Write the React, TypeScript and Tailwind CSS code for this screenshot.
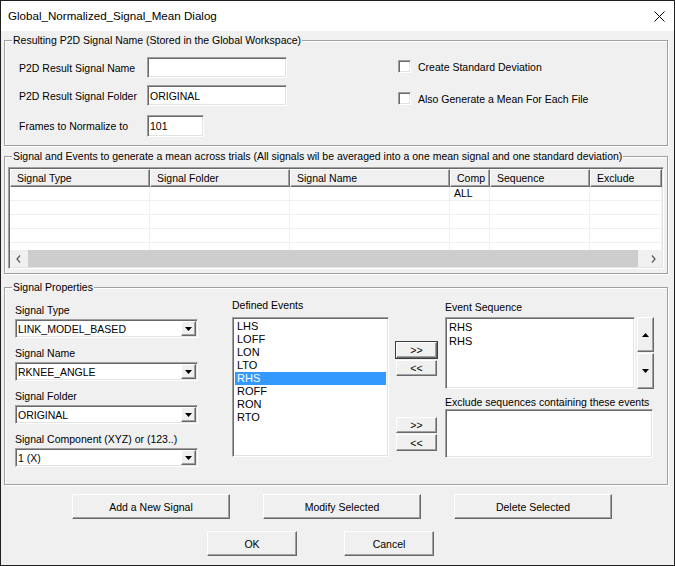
import React from "react";

// Classic Win32 3D edges
const sunken =
  "border border-t-[#a0a0a0] border-l-[#a0a0a0] border-b-white border-r-white shadow-[inset_1px_1px_0_#696969,inset_-1px_-1px_0_#e3e3e3] bg-white";
const raised =
  "border border-t-white border-l-white border-b-[#696969] border-r-[#696969] shadow-[inset_-1px_-1px_0_#a0a0a0] bg-[#f0f0f0]";

function GroupBox({
  title,
  className = "",
  children,
}: {
  title: string;
  className?: string;
  children?: React.ReactNode;
}) {
  return (
    <div
      className={`relative w-[664px] border border-[#a0a0a0] shadow-[inset_1px_1px_0_#fff,1px_1px_0_#fff] ${className}`}
    >
      <span className="absolute left-[7px] -top-[8px] bg-[#f0f0f0] px-[1px] leading-[14px] whitespace-nowrap">
        {title}
      </span>
      {children}
    </div>
  );
}

function DownTri() {
  return (
    <svg width="7" height="4" viewBox="0 0 7 4">
      <path d="M0 0h7L3.5 4z" fill="#000" />
    </svg>
  );
}

function UpTri() {
  return (
    <svg width="7" height="4" viewBox="0 0 7 4">
      <path d="M0 4h7L3.5 0z" fill="#000" />
    </svg>
  );
}

function Combo({ value }: { value: string }) {
  return (
    <div className={`${sunken} p-[1px] h-[19px] w-[183px] flex items-center`}>
      <span className="flex-1 pl-[1px] leading-[14px] whitespace-nowrap overflow-hidden">
        {value}
      </span>
      <div className={`${raised} w-[15px] h-full flex items-center justify-center`}>
        <DownTri />
      </div>
    </div>
  );
}

function Checkbox({ label }: { label: string }) {
  return (
    <div className="flex items-center gap-[7px] h-[13px]">
      <div className={`${sunken} w-[13px] h-[13px]`} />
      <span className="leading-[14px]">{label}</span>
    </div>
  );
}

function Button({
  label,
  className = "",
  isDefault = false,
}: {
  label: string;
  className?: string;
  isDefault?: boolean;
}) {
  return (
    <div
      className={`${raised} flex items-center justify-center leading-[14px] ${
        isDefault ? "outline outline-1 outline-[#3c3c3c]" : ""
      } ${className}`}
    >
      {label}
    </div>
  );
}

const columns = [
  { name: "Signal Type", w: "w-[140px]" },
  { name: "Signal Folder", w: "w-[140px]" },
  { name: "Signal Name", w: "w-[160px]" },
  { name: "Comp", w: "w-[40px]" },
  { name: "Sequence", w: "w-[100px]" },
  { name: "Exclude", w: "w-[72px]" },
];

const definedEvents = ["LHS", "LOFF", "LON", "LTO", "RHS", "ROFF", "RON", "RTO"];

export default function App() {
  return (
    <div className="w-[675px] h-[566px] border border-[#1f1f1f] bg-[#f0f0f0] flex flex-col text-[10.5px] text-black font-['Liberation_Sans',Arial,sans-serif] overflow-hidden">
      {/* Title bar */}
      <div className="h-[30px] shrink-0 bg-white flex items-center justify-between pl-[7px] pr-[9px]">
        <span className="text-[11.6px] leading-[16px]">Global_Normalized_Signal_Mean Dialog</span>
        <svg width="11" height="11" viewBox="0 0 11 11">
          <path d="M0.5 0.5L10.5 10.5M10.5 0.5L0.5 10.5" stroke="#000" strokeWidth="1" />
        </svg>
      </div>

      {/* Resulting signal name */}
      <GroupBox
        title="Resulting P2D Signal Name (Stored in the Global Workspace)"
        className="ml-[3px] mt-[9px] h-[106px] flex"
      >
        <div className="pl-[14px] pt-[16px] flex flex-col">
          <div className="flex items-center">
            <span className="w-[128px] leading-[14px]">P2D Result Signal Name</span>
            <div className={`${sunken} w-[140px] h-[21px]`} />
          </div>
          <div className="flex items-center mt-[7px]">
            <span className="w-[128px] leading-[14px]">P2D Result Signal Folder</span>
            <div className={`${sunken} w-[140px] h-[21px] flex items-center pl-[2px] leading-[14px]`}>
              ORIGINAL
            </div>
          </div>
          <div className="flex items-center mt-[9px]">
            <span className="w-[128px] leading-[14px]">Frames to Normalize to</span>
            <div className={`${sunken} w-[57px] h-[22px] flex items-center pl-[2px] leading-[14px]`}>
              101
            </div>
          </div>
        </div>
        <div className="ml-[111px] pt-[19px] flex flex-col gap-[19px]">
          <Checkbox label="Create Standard Deviation" />
          <Checkbox label="Also Generate a Mean For Each File" />
        </div>
      </GroupBox>

      {/* Signal list */}
      <GroupBox
        title="Signal and Events to generate a mean across trials (All signals wil be averaged into a one mean signal and one standard deviation)"
        className="ml-[3px] mt-[10px] h-[118px]"
      >
        <div className={`${sunken} p-[1px] ml-[3px] mt-[10px] w-[656px] h-[102px] flex flex-col`}>
          <div className="flex h-[18px] shrink-0">
            {columns.map((c) => (
              <div
                key={c.name}
                className={`${raised} ${c.w} shrink-0 h-full flex items-center pl-[6px] leading-[14px] whitespace-nowrap`}
              >
                {c.name}
              </div>
            ))}
          </div>
          <div className="flex-1 overflow-hidden bg-white">
            {[0, 1, 2, 3, 4].map((r) => (
              <div key={r} className="flex h-[14px] border-b border-[#f0f0f0]">
                {columns.map((c) => (
                  <div
                    key={c.name}
                    className={`${c.w} shrink-0 h-full border-r border-[#f0f0f0] pl-[4px] leading-[13px]`}
                  >
                    {r === 0 && c.name === "Comp" ? "ALL" : ""}
                  </div>
                ))}
              </div>
            ))}
          </div>
          <div className="h-[17px] shrink-0 flex bg-[#f0f0f0]">
            <div className="w-[17px] h-full flex items-center justify-center">
              <svg width="5" height="8" viewBox="0 0 5 8">
                <path d="M4 0.5L1 4l3 3.5" stroke="#606060" strokeWidth="1.3" fill="none" />
              </svg>
            </div>
            <div className="ml-[1px] w-[610px] h-full bg-[#cdcdcd]" />
            <div className="flex-1" />
            <div className="w-[17px] h-full flex items-center justify-center">
              <svg width="5" height="8" viewBox="0 0 5 8">
                <path d="M1 0.5L4 4l-3 3.5" stroke="#606060" strokeWidth="1.3" fill="none" />
              </svg>
            </div>
          </div>
        </div>
      </GroupBox>

      {/* Signal properties */}
      <GroupBox title="Signal Properties" className="ml-[3px] mt-[13px] h-[198px] flex items-start">
        <div className="ml-[10px] pt-[15px] flex flex-col w-[183px]">
          {[
            ["Signal Type", "LINK_MODEL_BASED"],
            ["Signal Name", "RKNEE_ANGLE"],
            ["Signal Folder", "ORIGINAL"],
            ["Signal Component (XYZ) or (123..)", "1 (X)"],
          ].map(([label, value]) => (
            <div key={label} className="h-[43px] flex flex-col">
              <span className="leading-[14px] whitespace-nowrap">{label}</span>
              <div className="mt-[2px]">
                <Combo value={value} />
              </div>
            </div>
          ))}
        </div>

        <div className="ml-[34px] pt-[10px] flex flex-col">
          <span className="leading-[14px]">Defined Events</span>
          <div className={`${sunken} mt-[5px] w-[157px] h-[140px] p-[2px] text-[11px]`}>
            {definedEvents.map((e) => (
              <div
                key={e}
                className={`h-[13px] leading-[13px] pl-[2px] ${e === "RHS" ? "bg-[#3399ff] text-white" : ""}`}
              >
                {e}
              </div>
            ))}
          </div>
        </div>

        <div className="ml-[7px] pt-[54px] flex flex-col">
          <Button label=">>" className="w-[41px] h-[16px]" isDefault />
          <Button label="<<" className="w-[41px] h-[16px] mt-[2px]" />
          <Button label=">>" className="w-[41px] h-[16px] mt-[41px]" />
          <Button label="<<" className="w-[41px] h-[17px] mt-[1px]" />
        </div>

        <div className="ml-[8px] pt-[12px] flex flex-col">
          <span className="leading-[14px]">Event Sequence</span>
          <div className="flex mt-[3px]">
            <div className={`${sunken} w-[190px] h-[72px] p-[2px] text-[11px]`}>
              {["RHS", "RHS"].map((e, i) => (
                <div key={i} className="h-[14px] leading-[14px] pl-[1px]">
                  {e}
                </div>
              ))}
            </div>
            <div className="ml-[2px] flex flex-col gap-[1px]">
              <div className={`${raised} w-[17px] h-[35px] flex items-center justify-center`}>
                <UpTri />
              </div>
              <div className={`${raised} w-[17px] h-[36px] flex items-center justify-center`}>
                <DownTri />
              </div>
            </div>
          </div>
          <span className="mt-[6px] leading-[14px] whitespace-nowrap">
            Exclude sequences containing these events
          </span>
          <div className={`${sunken} w-[208px] h-[49px]`} />
        </div>
      </GroupBox>

      {/* Action buttons */}
      <div className="ml-[71px] mt-[9px] flex gap-[33px]">
        <Button label="Add a New Signal" className="w-[158px] h-[25px]" />
        <Button label="Modify Selected" className="w-[158px] h-[25px]" />
        <Button label="Delete Selected" className="w-[158px] h-[25px]" />
      </div>
      <div className="ml-[206px] mt-[12px] flex gap-[47px]">
        <Button label="OK" className="w-[90px] h-[25px]" />
        <Button label="Cancel" className="w-[90px] h-[25px]" />
      </div>
    </div>
  );
}
